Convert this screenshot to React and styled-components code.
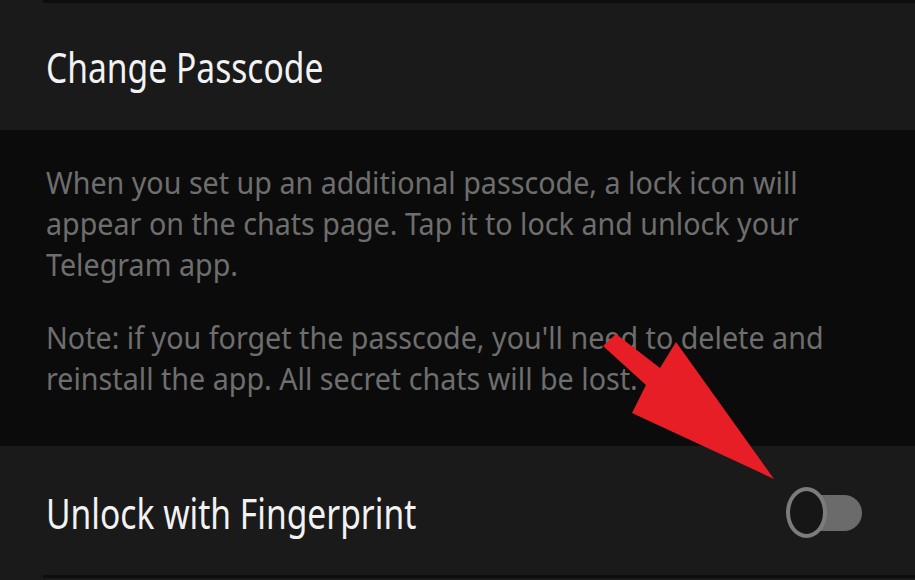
import styled, { createGlobalStyle } from "styled-components";

const GlobalStyle = createGlobalStyle`
    html, body {
        margin: 0;
        padding: 0;
        background: #1a1a1a;
        overflow: hidden;
    }
`;

const App = () => {
    return (
        <Page>
            <GlobalStyle />
            <Divider />
            <Row>
                <Title>Change Passcode</Title>
            </Row>
            <Info>
                <Paragraph>
                    When you set up an additional passcode, a lock icon will
                    <br />
                    appear on the chats page. Tap it to lock and unlock your
                    <br />
                    Telegram app.
                </Paragraph>
                <Paragraph>
                    Note: if you forget the passcode, you'll need to delete and
                    <br />
                    reinstall the app. All secret chats will be lost.
                </Paragraph>
            </Info>
            <Row $tall>
                <Title>Unlock with Fingerprint</Title>
                <Switch>
                    <Track />
                    <Thumb />
                </Switch>
            </Row>
            <Divider />
            <Arrow viewBox="0 0 915 580">
                <polygon
                    points="603,346 616,334 660,368 676,342 774,479 632,413 646,385"
                    fill="#e81e27"
                />
            </Arrow>
        </Page>
    );
};

const Page = styled.div`
    position: relative;
    width: 915px;
    height: 580px;
    display: flex;
    flex-direction: column;
    background: #1a1a1a;
    font-family: "Noto Sans", "Open Sans", sans-serif;
    overflow: hidden;
`;

const Divider = styled.div`
    height: 3px;
    margin-left: 43px;
    background: #0d0d0d;
    flex-shrink: 0;
`;

const Row = styled.div`
    height: ${(p) => (p.$tall ? "129px" : "127px")};
    flex-shrink: 0;
    display: flex;
    align-items: center;
    justify-content: space-between;
    padding: ${(p) => (p.$tall ? "4px 53px 0 46px" : "0 53px 0 46px")};
    box-sizing: border-box;
    background: #1a1a1a;
`;

const Title = styled.span`
    display: inline-block;
    font-size: 42px;
    line-height: 1;
    color: #f2f2f2;
    transform: scaleX(0.8);
    transform-origin: left center;
    white-space: nowrap;
`;

const Info = styled.div`
    height: 316px;
    flex-shrink: 0;
    box-sizing: border-box;
    background: #0b0b0b;
    padding: 32px 0 0 46px;
    display: flex;
    flex-direction: column;
    gap: 32px;
`;

const Paragraph = styled.p`
    margin: 0;
    font-size: 31px;
    line-height: 41px;
    color: #6e6e6e;
    white-space: nowrap;
    transform: scaleX(0.925);
    transform-origin: left center;
`;

const Switch = styled.div`
    position: relative;
    width: 76px;
    height: 51px;
    display: flex;
    align-items: center;
    justify-content: flex-end;
`;

const Track = styled.div`
    width: 62px;
    height: 36px;
    border-radius: 18px;
    background: #6b6b6b;
`;

const Thumb = styled.div`
    position: absolute;
    left: 0;
    top: 0;
    width: 41px;
    height: 51px;
    box-sizing: border-box;
    border-radius: 50%;
    border: 4px solid #7c7c7c;
    background: #161616;
`;

const Arrow = styled.svg`
    position: absolute;
    left: 0;
    top: 0;
    width: 915px;
    height: 580px;
    pointer-events: none;
`;

export default App;
